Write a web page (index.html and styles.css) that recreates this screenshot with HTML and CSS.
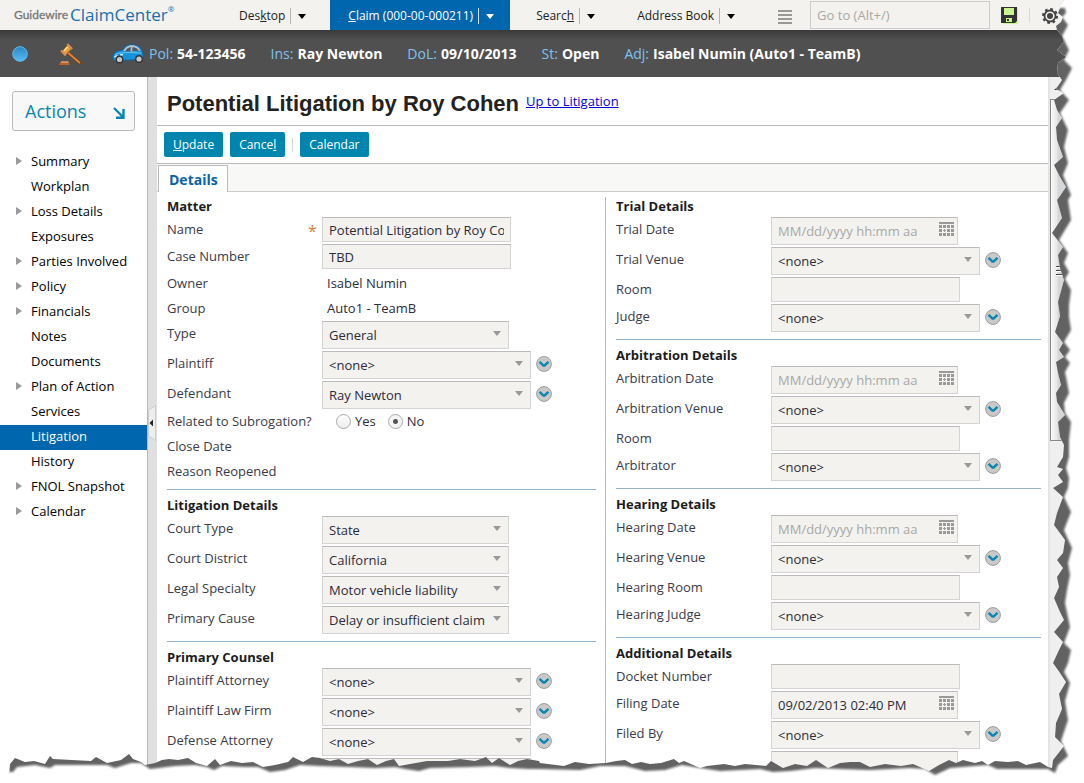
FILE: index.html
```html
<!DOCTYPE html>
<html lang="en">
<head>
<meta charset="utf-8">
<title>Guidewire ClaimCenter - Potential Litigation</title>
<link rel="stylesheet" href="styles.css">
</head>
<body>
<svg class="defs" aria-hidden="true">
  <symbol id="more" viewBox="0 0 16 16"><circle cx="8" cy="8" r="7.4" fill="#c9c9c9" stroke="#9c9c9c"/><path d="M3.500 5.800L7 9.200q1 .8 2 0l3.500-3.400" fill="none" stroke="#0a86b0" stroke-width="2.400"/></symbol>
  <symbol id="cal" viewBox="0 0 15 14"><path fill="#999" d="M0 0h15v2H0zM0 3h3v3H0zM4 3h3v3H4zM8 3h3v3H8zM12 3h3v3h-3zM0 7h3v3H0zM5 7h1v1h1v1H6v1H5V9H4V8h1zM8 7h3v3H8zM12 7h3v3h-3zM0 11h3v3H0zM4 11h3v3H4zM8 11h3v3H8zM12 11h3v3h-3z"/></symbol>
</svg>

<header class="topbar">
  <div class="logo"><span class="brand">Guidewire</span><span class="product">ClaimCenter</span><sup>®</sup></div>
  <nav class="tabs">
    <a class="tab" href="#"><span>Des<u>k</u>top</span><i class="caret"></i></a>
    <a class="tab active" href="#"><span><u>C</u>laim (000-00-000211)</span><i class="caret"></i></a>
    <a class="tab" href="#"><span>Searc<u>h</u></span><i class="caret"></i></a>
    <a class="tab" href="#"><span>Address Book</span><i class="caret"></i></a>
  </nav>
  <button class="icon" aria-label="Menu"><svg width="14" height="14" viewBox="0 0 14 14"><path fill="#999" d="M0 0h14v2H0zM0 4h14v2H0zM0 8h14v2H0zM0 12h14v2H0z"/></svg></button>
  <input class="goto" type="text" placeholder="Go to (Alt+/)" aria-label="Go to">
  <button class="icon" aria-label="Save"><svg width="17" height="17" viewBox="0 0 17 17"><path fill="#c9f58e" d="M1 1h16v16H2z"/><path fill="#333" d="M0 0h16v14l-2 2H0z"/><path fill="#c9f58e" d="M3 1h10v7H3zM5 11h6v4H5z"/><path fill="#333" d="M6 12h2v2H6z"/></svg></button>
  <span class="rule"></span>
  <button class="icon gear" aria-label="Settings"><svg width="16" height="16" viewBox="0 0 16 16"><circle cx="8" cy="8" r="7" fill="none" stroke="#444" stroke-width="2" stroke-dasharray="2.750 2.750"/><circle cx="8" cy="8" r="5.500" fill="none" stroke="#444" stroke-width="1.800"/><circle cx="8" cy="8" r="3" fill="#444"/></svg></button>
</header>

<div class="infobar">
  <svg class="dot" width="16" height="16" viewBox="0 0 16 16"><defs><linearGradient id="gd" x2="0" y2="1"><stop stop-color="#2b86c4"/><stop offset="1" stop-color="#55bdf2"/></linearGradient></defs><circle cx="8" cy="8" r="7.300" fill="url(#gd)" stroke="#5ebcf0"/></svg>
  <svg class="gavel" width="22" height="22" viewBox="0 0 22 22"><path d="M8.500 9.500L20.500 20" stroke="#6b3d17" stroke-width="3.600" stroke-linecap="round"/><path d="M8.500 9.200L20.300 19.600" stroke="#d9863e" stroke-width="2" stroke-linecap="round"/><path d="M3 8L8.500 2l3.800 4.200L6.800 12z" fill="#e2a13d" stroke="#8a5320"/><path d="M2 7.500l4.800 5M8.300 1l4.800 5" stroke="#d98f5c" stroke-width="2"/><path d="M5 7.800l3.800-4" stroke="#ffe08b" stroke-width="1.500"/><path d="M1.500 19h8l1.500 3H0z" fill="#b8632f"/><path d="M2 19h7.500" stroke="#f0ac78" stroke-width="1.300"/></svg>
  <svg class="car" width="32" height="20" viewBox="0 0 32 20"><path d="M.8 13c0-3.500 4-6.500 10-7C13 2.500 15.500.8 20.500.8c6 0 9 3.200 10 7.700 1 2.500 1 5-.3 7l-27 1c-2-.5-2.600-2-2.400-3.500z" fill="#1592d8" stroke="#0a5f9c" stroke-width=".8"/><path d="M11 7C13.500 3 15.500 1.200 20 1.200c4.500 0 7 2.200 8.500 5.300l-7 1z" fill="#b5c3cd"/><path d="M13 7.200c2-2.700 3.300-3.800 6-4l-.7 4.300zM20.500 3.200c3.200 0 5 1.200 6.200 3.500l-6.500.6z" fill="#4a5a66"/><path d="M3 10.500c5-2.500 15-2 26.500-1.500" fill="none" stroke="#6cc6f5"/><path d="M2.500 13l3-1.500M8 11l3-.5" stroke="#d8f0ff" stroke-width="1.500"/><circle cx="7.500" cy="15.500" r="3.900" fill="#333"/><circle cx="7.500" cy="15.500" r="2.600" fill="#c6c6c6"/><circle cx="27" cy="15" r="3.900" fill="#333"/><circle cx="27" cy="15" r="2.600" fill="#c6c6c6"/></svg>
  <dl class="facts">
    <div><dt>Pol:</dt><dd>54-123456</dd></div>
    <div><dt>Ins:</dt><dd>Ray Newton</dd></div>
    <div><dt>DoL:</dt><dd>09/10/2013</dd></div>
    <div><dt>St:</dt><dd>Open</dd></div>
    <div><dt>Adj:</dt><dd>Isabel Numin (Auto1 - TeamB)</dd></div>
  </dl>
</div>

<div class="workspace">
  <aside class="sidebar">
    <button class="actions">Actions<svg width="12" height="12" viewBox="0 0 12 12"><path d="M1 1l9 9M10.500 2v8.700H3" fill="none" stroke="#0a86ae" stroke-width="2.400"/></svg></button>
    <nav class="steps">
      <a class="parent" href="#">Summary</a>
      <a href="#">Workplan</a>
      <a class="parent" href="#">Loss Details</a>
      <a href="#">Exposures</a>
      <a class="parent" href="#">Parties Involved</a>
      <a class="parent" href="#">Policy</a>
      <a class="parent" href="#">Financials</a>
      <a href="#">Notes</a>
      <a href="#">Documents</a>
      <a class="parent" href="#">Plan of Action</a>
      <a href="#">Services</a>
      <a class="current" href="#">Litigation</a>
      <a href="#">History</a>
      <a class="parent" href="#">FNOL Snapshot</a>
      <a class="parent" href="#">Calendar</a>
    </nav>
  </aside>
  <div class="splitter"><button aria-label="Collapse sidebar"><svg width="8" height="36" viewBox="0 0 8 36"><path d="M7.500.5v35L.5 31V5z" fill="#eee" stroke="#ccc"/><path d="M5 14.500v7L1.500 18z" fill="#222"/></svg></button></div>

  <main class="page">
    <div class="title"><h1>Potential Litigation by Roy Cohen</h1><a href="#">Up to Litigation</a></div>
    <div class="toolbar"><button><u>U</u>pdate</button><button>Cance<u>l</u></button><span class="rule"></span><button>Calendar</button></div>
    <div class="cards"><a class="card" href="#">Details</a></div>

    <form class="columns">
      <div class="column">
        <section>
          <h2>Matter</h2>
          <div class="row"><label for="name">Name</label><span class="req">*</span><input id="name" type="text" value="Potential Litigation by Roy Cohen"></div>
          <div class="row"><label for="case">Case Number</label><input id="case" type="text" value="TBD"></div>
          <div class="row text"><span class="label">Owner</span><output>Isabel Numin</output></div>
          <div class="row text"><span class="label">Group</span><output>Auto1 - TeamB</output></div>
          <div class="row"><label for="type">Type</label><span class="pick"><select id="type"><option>General</option></select></span></div>
          <div class="row"><label for="pl">Plaintiff</label><span class="pick wide"><select id="pl"><option>&lt;none&gt;</option></select></span><button type="button" class="more" aria-label="Plaintiff options"><svg><use href="#more"/></svg></button></div>
          <div class="row"><label for="df">Defendant</label><span class="pick wide"><select id="df"><option>Ray Newton</option></select></span><button type="button" class="more" aria-label="Defendant options"><svg><use href="#more"/></svg></button></div>
          <div class="row choice"><span class="label">Related to Subrogation?</span><span class="radios"><label><input type="radio" name="sub">Yes</label><label><input type="radio" name="sub" checked>No</label></span></div>
          <div class="row text"><span class="label">Close Date</span></div>
          <div class="row text"><span class="label">Reason Reopened</span></div>
        </section>
        <section>
          <h2>Litigation Details</h2>
          <div class="row"><label for="ct">Court Type</label><span class="pick"><select id="ct"><option>State</option></select></span></div>
          <div class="row"><label for="cd">Court District</label><span class="pick"><select id="cd"><option>California</option></select></span></div>
          <div class="row"><label for="ls">Legal Specialty</label><span class="pick"><select id="ls"><option>Motor vehicle liability</option></select></span></div>
          <div class="row"><label for="pc">Primary Cause</label><span class="pick"><select id="pc"><option>Delay or insufficient claim</option></select></span></div>
        </section>
        <section>
          <h2>Primary Counsel</h2>
          <div class="row"><label for="pa">Plaintiff Attorney</label><span class="pick wide"><select id="pa"><option>&lt;none&gt;</option></select></span><button type="button" class="more" aria-label="Plaintiff Attorney options"><svg><use href="#more"/></svg></button></div>
          <div class="row"><label for="pf">Plaintiff Law Firm</label><span class="pick wide"><select id="pf"><option>&lt;none&gt;</option></select></span><button type="button" class="more" aria-label="Plaintiff Law Firm options"><svg><use href="#more"/></svg></button></div>
          <div class="row"><label for="da">Defense Attorney</label><span class="pick wide"><select id="da"><option>&lt;none&gt;</option></select></span><button type="button" class="more" aria-label="Defense Attorney options"><svg><use href="#more"/></svg></button></div>
          <div class="row"><span class="label"></span><span class="pick wide"><select aria-label="Defense Law Firm"><option></option></select></span></div>
        </section>
      </div>

      <div class="column second">
        <section>
          <h2>Trial Details</h2>
          <div class="row"><label for="td">Trial Date</label><span class="date"><input id="td" type="text" placeholder="MM/dd/yyyy hh:mm aa"><svg><use href="#cal"/></svg></span></div>
          <div class="row"><label for="tv">Trial Venue</label><span class="pick wide"><select id="tv"><option>&lt;none&gt;</option></select></span><button type="button" class="more" aria-label="Trial Venue options"><svg><use href="#more"/></svg></button></div>
          <div class="row"><label for="tr">Room</label><input id="tr" type="text"></div>
          <div class="row"><label for="tj">Judge</label><span class="pick wide"><select id="tj"><option>&lt;none&gt;</option></select></span><button type="button" class="more" aria-label="Judge options"><svg><use href="#more"/></svg></button></div>
        </section>
        <section>
          <h2>Arbitration Details</h2>
          <div class="row"><label for="ad">Arbitration Date</label><span class="date"><input id="ad" type="text" placeholder="MM/dd/yyyy hh:mm aa"><svg><use href="#cal"/></svg></span></div>
          <div class="row"><label for="av">Arbitration Venue</label><span class="pick wide"><select id="av"><option>&lt;none&gt;</option></select></span><button type="button" class="more" aria-label="Arbitration Venue options"><svg><use href="#more"/></svg></button></div>
          <div class="row"><label for="ar">Room</label><input id="ar" type="text"></div>
          <div class="row"><label for="aa">Arbitrator</label><span class="pick wide"><select id="aa"><option>&lt;none&gt;</option></select></span><button type="button" class="more" aria-label="Arbitrator options"><svg><use href="#more"/></svg></button></div>
        </section>
        <section>
          <h2>Hearing Details</h2>
          <div class="row"><label for="hd">Hearing Date</label><span class="date"><input id="hd" type="text" placeholder="MM/dd/yyyy hh:mm aa"><svg><use href="#cal"/></svg></span></div>
          <div class="row"><label for="hv">Hearing Venue</label><span class="pick wide"><select id="hv"><option>&lt;none&gt;</option></select></span><button type="button" class="more" aria-label="Hearing Venue options"><svg><use href="#more"/></svg></button></div>
          <div class="row"><label for="hr">Hearing Room</label><input id="hr" type="text"></div>
          <div class="row"><label for="hj">Hearing Judge</label><span class="pick wide"><select id="hj"><option>&lt;none&gt;</option></select></span><button type="button" class="more" aria-label="Hearing Judge options"><svg><use href="#more"/></svg></button></div>
        </section>
        <section>
          <h2>Additional Details</h2>
          <div class="row"><label for="dn">Docket Number</label><input id="dn" type="text"></div>
          <div class="row"><label for="fd">Filing Date</label><span class="date"><input id="fd" type="text" value="09/02/2013 02:40 PM"><svg><use href="#cal"/></svg></span></div>
          <div class="row"><label for="fb">Filed By</label><span class="pick wide"><select id="fb"><option>&lt;none&gt;</option></select></span><button type="button" class="more" aria-label="Filed By options"><svg><use href="#more"/></svg></button></div>
          <div class="row"><span class="label"></span><span class="date"><input type="text" aria-label="Service date"></span></div>
        </section>
      </div>
    </form>
  </main>
  <div class="scroll"><svg class="up" width="8" height="8" viewBox="0 0 8 8"><path d="M0 7l6-5v5z" fill="#333"/></svg><div class="thumb"><i></i><i></i><i></i></div></div>
</div>

<svg class="tear" viewBox="0 0 1084 783" preserveAspectRatio="none" aria-hidden="true">
  <defs>
    <clipPath id="outside"><path d="M1065 0L1060 8 1058 13 1063 17 1061 22 1056 26 1057 30 1062 36 1064 42 1057 50 1066 57 1058 63 1057 73 1062 80 1056 89 1064 93 1054 100 1057 110 1062 118 1056 127 1057 140 1063 157 1054 165 1060 177 1066 187 1060 196 1057 200 1062 218 1052 233 1063 247 1058 255 1060 268 1064 280 1058 302 1060 316 1055 332 1063 343 1059 350 1064 357 1056 362 1058 373 1061 385 1056 393 1057 402 1065 415 1058 422 1060 437 1064 445 1063 457 1057 467 1063 469 1058 475 1063 482 1053 488 1063 497 1057 513 1054 525 1065 540 1063 553 1057 560 1063 568 1057 577 1059 587 1054 598 1060 612 1064 620 1054 632 1063 642 1059 650 1053 663 1060 673 1066 682 1059 694 1062 709 1056 723 1055 737 1064 746 1053 760 1052 768
      1048 767 1040 762 1026 765 1018 761 1008 762 995 761 988 765 982 761 975 763 963 760 956 763 949 760 939 765 929 771 913 764 901 766 885 764 870 767 860 762 850 762 840 763 828 768 816 760 807 766 795 764 783 768 771 761 766 766 745 764 735 766 724 764 707 766 700 768 684 761 679 763 674 759 661 763 650 764 641 762 632 764 625 760 616 761 606 763 589 764 575 762 564 766 540 763 539 761 527 759 518 761 510 765 499 758 492 763 486 757 475 761 460 759 448 761 427 761 410 764 399 766 394 759 386 761 377 765 368 759 358 761 348 764 339 759 330 761 320 758 312 757 303 762 293 757 288 762 275 765 263 767 253 762 242 763 231 761 220 765 215 759 207 766 196 763 188 758 178 760 169 759 162 760 155 763 145 765 141 762 133 759 129 754 121 760 107 763 96 757 91 761 72 760 53 759 50 756 45 764 34 761 25 762 15 758 10 764 9 772 0 772V783H1084V0z"/></clipPath>
    <filter id="soft" x="-5%" y="-5%" width="110%" height="110%"><feGaussianBlur stdDeviation="1.200"/></filter>
  </defs>
  <g clip-path="url(#outside)">
    <path fill="#fff" d="M0 0h1084v783H0z"/>
    <path fill="#626262" filter="url(#soft)" d="M1045 8L1065 8 1066 13 1062 17 1068 25 1062 36 1069 50 1064 60 1072 68 1066 80 1060 90 1069 100 1060 113 1068 130 1064 147 1068 163 1063 175 1071 195 1068 200 1071 220 1059 240 1068 253 1064 263 1069 272 1065 279 1071 290 1069 305 1069 317 1071 330 1064 342 1070 350 1065 357 1070 363 1065 372 1067 382 1069 393 1064 403 1065 413 1071 422 1069 440 1069 457 1066 468 1069 478 1068 488 1064 497 1071 512 1064 530 1067 537 1072 548 1068 563 1070 575 1067 590 1065 603 1070 627 1064 643 1071 650 1068 663 1064 672 1070 683 1065 701 1068 720 1061 741 1068 756 1058 765 1055 773
      1048 769 1020 769 997 769 988 765 975 766 950 768 935 775 925 769 910 768 870 770 840 769 815 768 790 771 773 772 760 769 720 771 700 768 682 765 665 770 645 771 625 766 600 766 580 770 540 769 530 769 510 768 495 766 470 767 430 768 419 771 405 769 395 767 375 768 350 767 320 766 300 765 285 770 270 772 258 767 245 767 222 766 214 770 207 767 195 765 175 766 150 769 141 763 131 763 115 768 107 765 93 765 55 765 50 768 35 765 17 767 13 772 9 772V745H1045z"/>
  </g>
</svg>
</body>
</html>
```
FILE: styles.css
```css
* { box-sizing: border-box; }

body {
  margin: 0;
  height: 100vh;
  overflow: hidden;
  display: flex;
  flex-direction: column;
  background: #fff;
  color: #2c2c3a;
  font: 13px/18px "Open Sans", "Noto Sans", sans-serif;
}

button, input, select { font: inherit; color: inherit; margin: 0; }
button { border: 0; padding: 0; background: none; cursor: pointer; }
a { text-decoration: none; color: inherit; }
.defs { display: none; }
svg { display: block; flex: none; }

/* Top bar */
.topbar {
  flex: none;
  display: flex;
  align-items: center;
  height: 30px;
  padding-left: 14px;
  background: #f3f2ee;
  color: #222;
}
.logo { display: flex; align-items: center; width: 200px; white-space: nowrap; }
.brand { width: 56px; font: 12px/20px Lato, sans-serif; color: #777; -webkit-text-stroke: 0.3px #777; }
.product { font-size: 17px; line-height: 26px; color: #1b6fae; }
.logo sup { align-self: flex-start; font-size: 8px; line-height: 14px; color: #1b6fae; }
.tabs { display: flex; gap: 8px; height: 30px; margin-left: 7px; font-size: 12px; }
.tab { display: flex; align-items: center; padding: 2px 16px 0 18px; white-space: nowrap; }
.tab.active { background: #0066ad; color: #fff; }
.caret { display: flex; align-items: center; height: 16px; margin-left: 5px; padding-left: 7px; border-left: 1px solid #b5b5b5; }
.caret::after { content: ""; border: 4px solid transparent; border-top: 5px solid #000; border-bottom: 0; }
.active .caret { border-color: #cfe2f0; }
.active .caret::after { border-top-color: #fff; }
.icon { margin: 3px 0 0 27px; }
.goto {
  width: 180px;
  height: 28px;
  margin: 0 0 0 18px;
  padding: 0 6px;
  border: 1px solid #ccc;
  background: transparent;
}
::placeholder { color: #a8a8a8; opacity: 1; }
.goto ~ .icon { margin: 1px 0 0 11px; }
.rule { width: 1px; height: 14px; background: #d8d8d8; }
.topbar .rule { margin-left: 11px; }
.goto ~ .gear { margin-left: 12px; }

/* Claim summary bar */
.infobar {
  flex: none;
  display: flex;
  align-items: center;
  height: 47px;
  padding-left: 12px;
  background: linear-gradient(#3a3a3a, #505050 10px);
}
.gavel { margin-left: 31px; }
.car { margin-left: 31px; }
.facts { display: flex; gap: 25px; margin: 0 0 0 5px; font-size: 14px; white-space: nowrap; }
.facts div { display: flex; gap: 4px; }
.facts dt { color: #7fc1ee; }
.facts dd { margin: 0; font-weight: bold; color: #fff; }

/* Sidebar */
.workspace { flex: 1; min-height: 0; display: flex; overflow: hidden; }
.sidebar { flex: none; width: 148px; border-right: 1px solid #b8b8b8; }
.actions {
  display: flex;
  align-items: center;
  justify-content: space-between;
  width: 123px;
  height: 40px;
  margin: 14px 0 19px 12px;
  padding: 0 9px 0 12px;
  border: 1px solid #bbb;
  border-radius: 3px;
  background: #f8f8f8;
  color: #0a86ae;
  font-size: 18px;
}
.actions svg { margin-top: 3px; }
.steps { display: flex; flex-direction: column; color: #000; }
.steps a { display: flex; align-items: center; height: 25px; padding: 0 0 4px 31px; }
.steps .parent { padding-left: 16px; }
.steps .parent::before { content: ""; margin-right: 9px; border: 4px solid transparent; border-left: 6px solid #999; border-right: 0; }
.steps .current { background: #0066ad; color: #fff; }
.splitter { flex: none; display: flex; width: 9px; padding: 328px 0 0 0; background: #e0e0e0; align-items: flex-start; }

/* Page */
.page { flex: 1; min-width: 0; }
.title { display: flex; align-items: center; gap: 7px; height: 49px; padding: 5px 0 0 10px; border-bottom: 1px solid #bbb; white-space: nowrap; }
h1 { margin: 0; font: bold 22px/28px "Liberation Sans", Arial, sans-serif; color: #222; }
.title a { color: #0000d8; text-decoration: underline; padding-bottom: 6px; }
.toolbar { display: flex; align-items: center; gap: 7px; height: 38px; padding-left: 7px; border-bottom: 1px solid #bbb; }
.toolbar button { height: 25px; padding: 0 9px; border-radius: 2px; background: #0086ae; color: #fff; font-size: 12px; }
.cards { display: flex; align-items: flex-end; height: 28px; padding-left: 1px; border-bottom: 1px solid #ccc; background: #f8f8f6; }
.card {
  height: 27px;
  margin-bottom: -1px;
  padding: 5px 9px 4px 10px;
  border: 1px solid #bbb;
  border-bottom: 0;
  background: #fff;
  color: #0a62a8;
  font-size: 14px;
  font-weight: bold;
}
.columns { display: grid; grid-template-columns: 448fr 443fr; padding-top: 5px; }
.column { min-width: 0; padding: 0 9px 0 10px; }
.second { padding-right: 7px; border-left: 1px solid #a3bfd6; }
section { padding-bottom: 5px; }
section + section { padding-top: 6px; border-top: 1px solid #93b4cc; }
h2 { margin: 0; padding-bottom: 2px; font-size: 13px; line-height: 18px; font-weight: bold; color: #1c1c1c; }

.row { position: relative; display: flex; align-items: flex-start; padding-bottom: 2px; white-space: nowrap; }
.row > label, .label { flex: none; width: 155px; padding-top: 3px; color: #3a3a4a; }
.row.text { height: 25px; }
.row.choice { height: 23px; }
.choice .label { padding-top: 1px; }
output { padding: 3px 0 0 5px; }
.req { position: absolute; left: 141px; top: 5px; color: #e07a3a; font-size: 16px; }

.row input[type="text"], select {
  width: 189px;
  height: 25px;
  padding: 0 6px;
  border: 1px solid #d4d4d4;
  border-top-color: #bbb;
  border-radius: 0;
  background: #f3f2ee;
  appearance: none;
}
.row .date, .pick { position: relative; width: 187px; height: 28px; }
.row .date input, .pick select { width: 100%; height: 28px; }
.date svg { position: absolute; right: 4px; top: 5px; width: 15px; height: 14px; }
.pick.wide { width: 209px; }
.pick::after { content: ""; position: absolute; right: 8px; top: 10px; border: 4px solid transparent; border-top: 5px solid #999; border-bottom: 0; }
.more { margin: 5px 0 0 5px; }
.more svg { width: 16px; height: 16px; }

.radios { display: flex; gap: 12px; padding: 1px 0 0 14px; }
.radios label { display: flex; align-items: center; gap: 4px; }
.radios input {
  width: 15px;
  height: 15px;
  border: 1px solid #aaa;
  border-radius: 50%;
  background: linear-gradient(#fff, #ececec);
  appearance: none;
}
.radios input:checked { background: radial-gradient(circle, #555 0 2px, #f4f4f4 3px); }

/* Scrollbar */
.scroll { flex: none; width: 36px; border-left: 2px solid #e4e4e4; background: #efefef; }
.up { margin: 6px 0 8px 4px; }
.thumb {
  height: 342px;
  padding: 166px 0 0 5px;
  border: 1px solid #888;
  background: linear-gradient(90deg, #fafafa 0, #e8e8e8 6px, #d6d7d9 7px);
}
.thumb i { display: block; width: 9px; height: 2px; margin-bottom: 2px; background: #444; border-bottom: 1px solid #fff; }

.tear { position: fixed; inset: 0; width: 100%; height: 100%; pointer-events: none; }
```
